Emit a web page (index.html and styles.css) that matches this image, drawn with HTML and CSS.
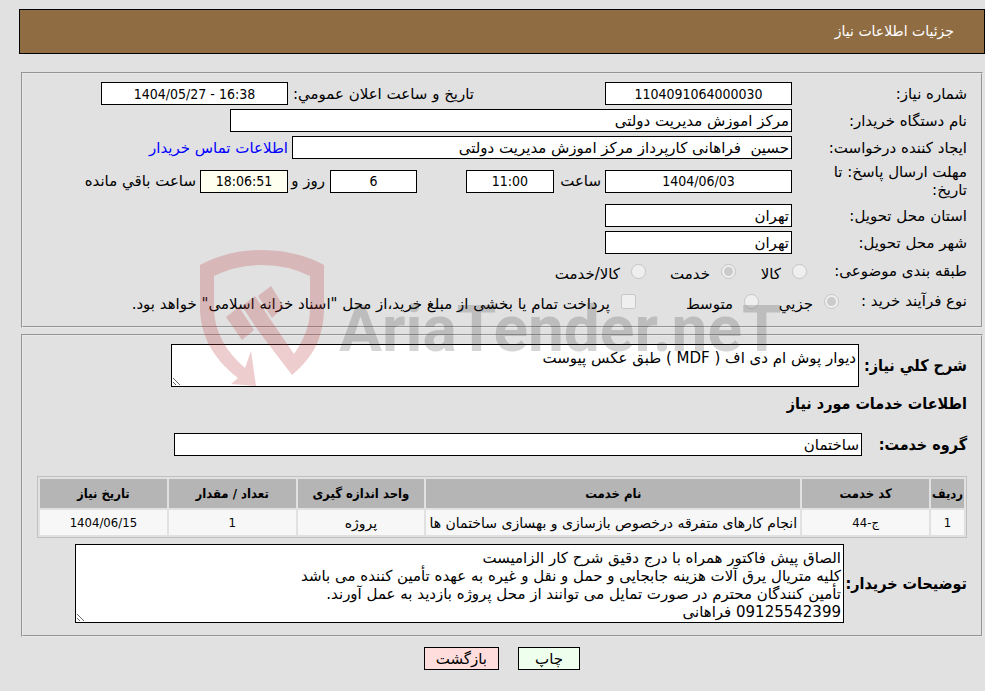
FILE: index.html
```html
<!DOCTYPE html>
<html lang="fa" dir="rtl">
<head>
    <meta charset="UTF-8">
    <meta name="viewport" content="width=device-width, initial-scale=1.0">
    <title>جزئیات اطلاعات نیاز</title>
    <link rel="stylesheet" href="styles.css">
</head>
<body>
    <header class="page-title">جزئیات اطلاعات نیاز</header>

    <main>
        <fieldset class="panel need-info">
            <div class="row">
                <label class="name" for="need-number">شماره نیاز:</label>
                <input type="text" id="need-number" class="field center" value="1104091064000030" readonly>
                <label class="public-date" for="public-date">تاریخ و ساعت اعلان عمومي:</label>
                <input type="text" id="public-date" class="field center" value="1404/05/27 - 16:38" dir="ltr" readonly>
            </div>
            <div class="row">
                <label class="name" for="buyer-name">نام دستگاه خریدار:</label>
                <input type="text" id="buyer-name" class="field buyer" value="مرکز اموزش مدیریت دولتی" readonly>
            </div>
            <div class="row">
                <label class="name" for="creator">ایجاد کننده درخواست:</label>
                <input type="text" id="creator" class="field creator" value="حسین  فراهانی کارپرداز مرکز اموزش مدیریت دولتی" readonly>
                <a class="contact" href="#">اطلاعات تماس خریدار</a>
            </div>
            <div class="row deadline">
                <label class="name" for="deadline-date">مهلت ارسال پاسخ: تا تاریخ:</label>
                <input type="text" id="deadline-date" class="field center" value="1404/06/03" readonly>
                <label class="hour" for="deadline-hour">ساعت</label>
                <input type="text" id="deadline-hour" class="field short center" value="11:00" readonly>
                <input type="text" id="days-left" class="field short center days" value="6" readonly>
                <label class="day" for="days-left">روز و</label>
                <input type="text" id="time-left" class="field short center timer" value="18:06:51" readonly>
                <label class="remain" for="time-left">ساعت باقي مانده</label>
            </div>
            <div class="row">
                <label class="name" for="province">استان محل تحویل:</label>
                <input type="text" id="province" class="field" value="تهران" readonly>
            </div>
            <div class="row">
                <label class="name" for="city">شهر محل تحویل:</label>
                <input type="text" id="city" class="field" value="تهران" readonly>
            </div>
            <div class="row options category">
                <span class="name">طبقه بندی موضوعی:</span>
                <label class="option goods"><input type="radio" name="category" disabled>کالا</label>
                <label class="option service"><input type="radio" name="category" checked disabled>خدمت</label>
                <label class="option"><input type="radio" name="category" disabled>کالا/خدمت</label>
            </div>
            <div class="row options process">
                <span class="name">نوع فرآیند خرید :</span>
                <label class="option small"><input type="radio" name="process" checked disabled>جزیي</label>
                <label class="option medium"><input type="radio" name="process" disabled>متوسط</label>
                <label class="option"><input type="checkbox" disabled>پرداخت تمام یا بخشی از مبلغ خرید،از محل "اسناد خزانه اسلامی" خواهد بود.</label>
            </div>
        </fieldset>

        <fieldset class="panel service-info">
            <div class="row">
                <label class="title" for="summary">شرح کلي نیاز:</label>
                <textarea id="summary" class="field summary" readonly>دیوار پوش ام دی اف ( MDF ) طبق عکس پیوست</textarea>
            </div>
            <h2>اطلاعات خدمات مورد نیاز</h2>
            <div class="row group">
                <label class="title" for="service-group">گروه خدمت:</label>
                <input type="text" id="service-group" class="field" value="ساختمان" readonly>
            </div>
            <table>
                <thead>
                    <tr>
                        <th class="col-row">ردیف</th>
                        <th>کد خدمت</th>
                        <th class="col-name">نام خدمت</th>
                        <th>واحد اندازه گیری</th>
                        <th>تعداد / مقدار</th>
                        <th>تاریخ نیاز</th>
                    </tr>
                </thead>
                <tbody>
                    <tr>
                        <td class="number">1</td>
                        <td class="number">ج-44</td>
                        <td>انجام کارهای متفرقه درخصوص بازسازی و بهسازی ساختمان ها</td>
                        <td>پروژه</td>
                        <td class="number">1</td>
                        <td class="number">1404/06/15</td>
                    </tr>
                </tbody>
            </table>
            <div class="row">
                <label class="title notes-title" for="notes">توضیحات خریدار:</label>
                <textarea id="notes" class="field notes" readonly>الصاق پیش فاکتور همراه با درج دقیق شرح کار الزامیست
کلیه متریال یرق آلات هزینه جابجایی و حمل و نقل و غیره به عهده تأمین کننده می باشد
تأمین کنندگان محترم در صورت تمایل می توانند از محل پروژه بازدید به عمل آورند.
09125542399 فراهانی</textarea>
            </div>
        </fieldset>

        <svg class="watermark" viewBox="0 0 590 136" direction="ltr" aria-label="AriaTender.neT">
            <g class="shield">
                <path d="M0 15Q28 0 62 0T124 15V57C124 86 114 107 92 125L57 79L70 69L94 104Q110 81 110 60V26Q88 15 62 15T14 26V60Q15 92 45 118L51 101L56 136L31 134L38 128C12 108 0 84 0 57Z"/>
                <path d="M42 56L55 46L70 69L57 79ZM58 46L71 36L84 57L72 68ZM26 67L39 57L54 80L42 90Z"/>
            </g>
            <text x="139" y="101">AriaTender.neT</text>
        </svg>
    </main>

    <div class="buttons">
        <button type="button" class="print">چاپ</button>
        <button type="button" class="back">بازگشت</button>
    </div>
</body>
</html>
```
FILE: styles.css
```css
/* General Styles */
* {
    box-sizing: border-box;
}

body {
    margin: 0;
    padding: 9px 0 0 19px;
    background-color: #e1e1e1;
    color: #000;
    font-family: "DejaVu Sans", sans-serif;
    font-size: 15px;
    line-height: 18px;
}

.page-title {
    height: 45px;
    padding: 0 30px;
    border: 1px solid #000;
    background-color: #8f6c42;
    color: #fff;
    font-size: 14px;
    line-height: 43px;
}

main {
    position: relative;
    margin: 18px 2px 0;
}

.panel {
    min-width: 0;
    margin: 0 0 6px;
    padding: 8px 14px;
    border: 2px groove #e8e8e8;
}

.row {
    display: flex;
    align-items: center;
    margin-bottom: 4px;
}

/* Form fields */
.field {
    width: 187px;
    height: 23px;
    margin: 0;
    padding: 0 2px;
    border: 1px solid #000;
    border-radius: 0;
    background-color: #fff;
    color: #000;
    font: inherit;
}

.center {
    font-family: "DejaVu Sans Condensed", "DejaVu Sans", sans-serif;
    font-size: 14px;
    text-align: center;
}

.short {
    width: 88px;
}

.name {
    flex: none;
    width: 175px;
}

.public-date {
    width: 186px;
    margin-right: 131px;
}

.buyer {
    width: 562px;
}

.creator {
    width: 500px;
}

.contact {
    margin-right: 4px;
    color: #00f;
    text-decoration: none;
}

.deadline {
    margin-bottom: 5px;
}

.deadline .name {
    padding-left: 32px;
}

.hour {
    width: 51px;
    padding-right: 4px;
}

.days {
    width: 87px;
    margin-right: 49px;
}

.day {
    width: 42px;
    padding-right: 5px;
}

.timer {
    background-color: #fffff0;
}

.remain {
    margin-right: 4px;
}

/* Radio buttons and checkbox */
.options {
    min-height: 26px;
}

.option {
    display: flex;
    gap: 11px;
    padding-top: 6px;
    line-height: 20px;
    white-space: nowrap;
}

.option input {
    width: 15px;
    height: 15px;
    margin: 0;
}

.category .name {
    width: 160px;
}

.goods {
    width: 71px;
}

.service {
    width: 90px;
}

.process .name {
    width: 128px;
}

.small {
    width: 80px;
}

.medium {
    width: 123px;
}

/* Service section */
.title,
h2 {
    font-family: "DejaVu Sans Condensed", "DejaVu Sans", sans-serif;
    font-size: 16px;
    font-weight: bold;
}

.title {
    flex: none;
    width: 103px;
    margin-left: 5px;
    white-space: nowrap;
}

h2 {
    margin: 8px 0 20px;
}

.summary {
    width: 688px;
    height: 43px;
    padding: 4px 2px;
}

.group .title {
    width: 100px;
}

.group .field {
    width: 688px;
}

.notes-title {
    width: 118px;
}

.notes {
    width: 769px;
    height: 79px;
    padding: 4px 2px 0;
}

table {
    width: 100%;
    margin: 20px 0 6px;
    border: 1px solid #c0c0c0;
    border-spacing: 2px;
    table-layout: fixed;
    text-align: center;
    font-size: 14px;
}

th {
    height: 29px;
    padding: 0;
    background-color: #b5b5b5;
    font-family: "DejaVu Sans Condensed", "DejaVu Sans", sans-serif;
    font-size: 13px;
}

td {
    height: 25px;
    padding: 0;
    background-color: #f7f7f7;
}

.number {
    font-family: "DejaVu Sans Condensed", "DejaVu Sans", sans-serif;
    font-size: 13px;
}

.col-row {
    width: 33px;
}

.col-name {
    width: 374px;
}

/* Watermark */
.watermark {
    position: absolute;
    top: 178px;
    left: 179px;
    width: 590px;
    height: 136px;
    pointer-events: none;
}

.shield {
    fill: #bd3d42;
    opacity: 0.25;
}

.watermark text {
    fill: #333;
    opacity: 0.2;
    font-family: Roboto, sans-serif;
    font-size: 64px;
    font-weight: bold;
}

/* Buttons */
.buttons {
    display: flex;
    justify-content: center;
    gap: 19px;
    margin-top: 10px;
}

button {
    height: 23px;
    padding: 0 11px;
    border: 1px solid #000;
    color: #000;
    font: inherit;
    cursor: pointer;
}

.print {
    width: 62px;
    background-color: #efe;
}

.back {
    width: 75px;
    background-color: #fdd;
}
```
